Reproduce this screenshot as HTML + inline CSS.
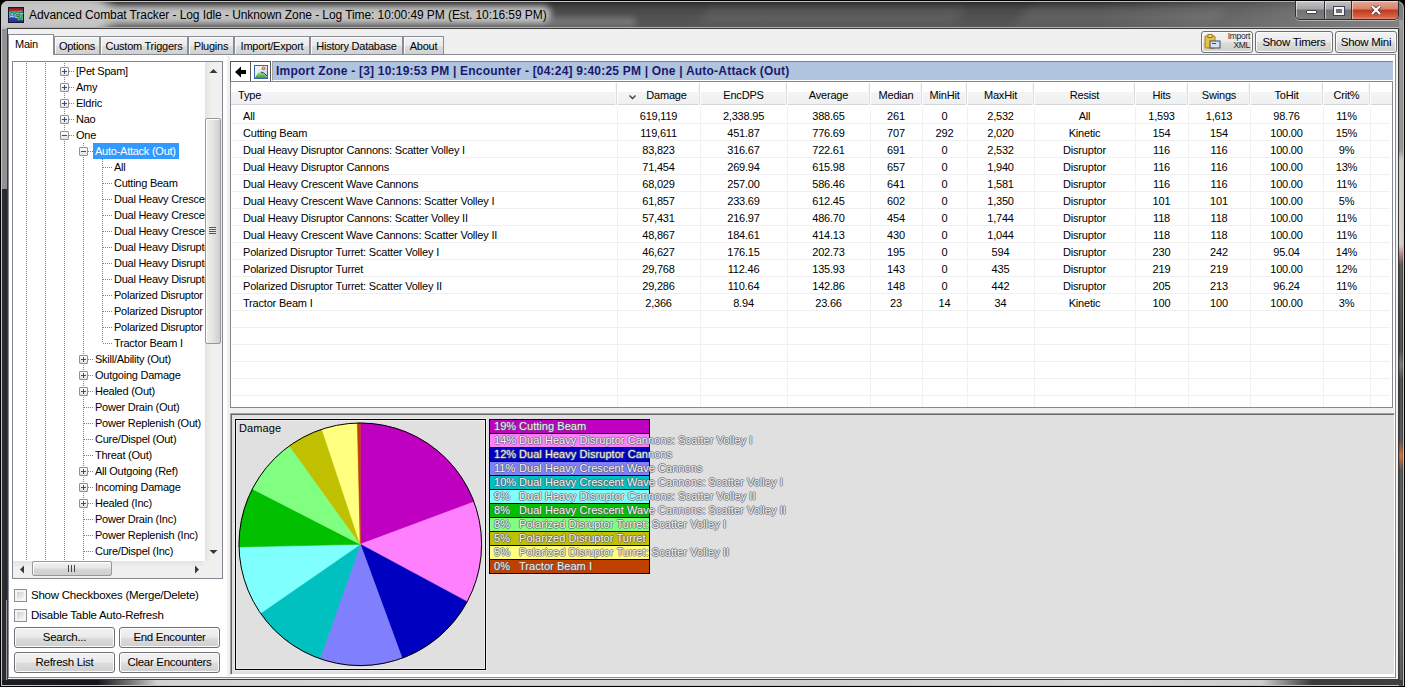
<!DOCTYPE html><html><head><meta charset="utf-8"><style>
*{margin:0;padding:0;box-sizing:border-box}
html,body{width:1405px;height:687px;overflow:hidden;background:#000}
body{position:relative;font-family:"Liberation Sans",sans-serif;font-size:11px;color:#000}
.ab{position:absolute}
.t{position:absolute;white-space:nowrap;letter-spacing:-0.25px;line-height:13px}
.btn{position:absolute;border:1px solid #707070;border-radius:3px;background:linear-gradient(#f2f2f2 0%,#ebebeb 48%,#dddddd 52%,#cfcfcf 100%);box-shadow:inset 0 0 0 1px #fcfcfc;text-align:center;white-space:nowrap;letter-spacing:-0.25px}
.tab{position:absolute;top:36px;height:19px;border:1px solid #898c95;border-bottom:none;background:linear-gradient(#f2f2f2 0%,#ebebeb 50%,#dddddd 50%,#cfcfcf 100%);box-shadow:inset 1px 1px 0 #fcfcfc;white-space:nowrap;letter-spacing:-0.25px;text-align:center;line-height:19px;font-size:11px}
.dotv{position:absolute;width:1px;background-image:linear-gradient(#808080 50%,transparent 50%);background-size:1px 2px}
.doth{position:absolute;height:1px;background-image:linear-gradient(90deg,#808080 50%,transparent 50%);background-size:2px 1px}
.pm{position:absolute;width:9px;height:9px;border:1px solid #919191;border-radius:1px;background:linear-gradient(#fdfdfd,#e2e2e2);}
.pm:before{content:"";position:absolute;left:1px;top:3px;width:5px;height:1px;background:#3f4b7a}
.pm.plus:after{content:"";position:absolute;left:3px;top:1px;width:1px;height:5px;background:#3f4b7a}
.row{position:absolute;left:0;height:17px;line-height:17px;white-space:nowrap;letter-spacing:-0.2px}
</style></head><body>
<div class="ab" style="left:0;top:0;width:1405px;height:687px;background:#000"></div><div class="ab" style="left:1px;top:1px;width:1403px;height:685px;border-radius:7px 7px 0 0;background:#c4c4c4"></div><div class="ab" style="left:2px;top:2px;width:1401px;height:27px;border-radius:6px 6px 0 0;background:linear-gradient(#2a2a2a 0,#3a3a3a 3px,#4a4a4a 8px,#525252 16px,#565656 25px)"></div><div class="ab" style="left:2px;top:29px;width:5px;height:160px;background:#929292"></div><div class="ab" style="left:2px;top:189px;width:5px;height:491px;background:linear-gradient(90deg,#2c2e33,#25272c)"></div><div class="ab" style="left:6px;top:600px;width:1px;height:80px;background:#9a9a9a"></div><div class="ab" style="left:1399px;top:20px;width:4px;height:666px;background:linear-gradient(#8a8a8a 0,#8a8a8a 130px,#c8c2c2 140px,#d0caca 225px,#b07070 235px,#484848 245px,#3c3c3c 330px,#6a6a6a 345px,#3a3a3a 360px,#454545 420px,#c06030 436px,#454545 450px,#505050 550px,#5a5a5a 600px,#444 666px)"></div><div class="ab" style="left:1400px;top:20px;width:2px;height:666px;background:rgba(255,255,255,0.12)"></div><div class="ab" style="left:2px;top:680px;width:1401px;height:5px;background:linear-gradient(90deg,#1c1e26 0,#15161c 95px,#7a7a7a 130px,#d2d2d2 155px,#dadada 400px,#cfcfcf 800px,#d8d8d8 1100px,#cdcdcd 1260px,#3a3a3a 1310px,#404040 1401px)"></div><div class="ab" style="left:1px;top:686px;width:1403px;height:1px;background:#000"></div><div class="ab" style="left:1px;top:1px;width:1403px;height:28px;overflow:hidden;border-radius:7px 7px 0 0"><div class="ab" style="left:-20px;top:5px;width:570px;height:18px;border-radius:0 8px 8px 0;background:#c2c2c2;filter:blur(3px)"></div><div class="ab" style="left:-20px;top:-6px;width:130px;height:40px;border-radius:0 20px 20px 0;background:#c6c6c6;filter:blur(6px)"></div><div class="ab" style="left:545px;top:17px;width:90px;height:8px;border-radius:4px;background:rgba(150,150,150,0.6);filter:blur(3px)"></div><div class="ab" style="left:700px;top:8px;width:260px;height:14px;border-radius:7px;background:rgba(120,120,120,0.35);filter:blur(5px);transform:skewX(-30deg)"></div><div class="ab" style="left:1020px;top:6px;width:200px;height:18px;border-radius:7px;background:rgba(130,130,130,0.35);filter:blur(6px);transform:skewX(-35deg)"></div><div class="ab" style="left:1100px;top:0px;width:303px;height:28px;background:linear-gradient(90deg,rgba(150,150,150,0) 0,rgba(150,150,150,0.45) 180px,rgba(160,160,160,0.6) 303px)"></div></div><div class="ab" style="left:7px;top:28px;width:1392px;height:652px;border:1px solid #3c3c3c;background:#f0f0f0;box-shadow:0 -1px 0 #b4b4b4"></div><svg class="ab" style="left:8px;top:7px" width="16" height="16" viewBox="0 0 16 16">
<defs><linearGradient id="bl" x1="0" y1="0" x2="0" y2="1"><stop offset="0" stop-color="#6a6ae8"/><stop offset="1" stop-color="#2a2a90"/></linearGradient>
<linearGradient id="rd" x1="0" y1="0" x2="0" y2="1"><stop offset="0" stop-color="#701828"/><stop offset="1" stop-color="#c84050"/></linearGradient></defs>
<rect x="0" y="0" width="16" height="16" fill="#15153a"/>
<rect x="1" y="1" width="14" height="14" fill="url(#bl)"/>
<path d="M1 1 H15 V4.5 Q13 3.3 11 4 Q9 5 7 4.3 Q4 3.8 1 5 Z" fill="url(#rd)"/>
<path d="M1 5 Q4 3.8 7 4.3 Q9 5 11 4 Q13 3.3 15 4.5 V13.5 Q12.5 12 10.5 13.5 Q8.5 10.5 5.5 9.8 Q3 9.2 1 10 Z" fill="#36c83a"/>
<text x="8" y="10.6" font-size="6.8" font-family="Liberation Sans" font-weight="bold" font-style="italic" fill="#b8d0ff" stroke="#1a2a60" stroke-width="0.8" paint-order="stroke" text-anchor="middle" letter-spacing="-0.2">ACT</text>
</svg><div class="t" style="left:29px;top:8px;font-size:12px;letter-spacing:-0.08px;line-height:14px;color:#000">Advanced Combat Tracker - Log Idle - Unknown Zone - Log Time: 10:00:49 PM (Est. 10:16:59 PM)</div><div class="ab" style="left:1295px;top:1px;width:104px;height:19px;border:1px solid #2e3038;border-top:none;border-radius:0 0 5px 5px;overflow:hidden;box-shadow:0 1px 0 rgba(255,255,255,0.45)">
<div class="ab" style="left:0;top:0;width:29px;height:18px;background:linear-gradient(#c4c4c4 0,#a4a4a4 45%,#747474 50%,#7e7e7e 100%);border-right:1px solid #2e3038;box-shadow:inset 1px 1px 0 rgba(255,255,255,0.55)"></div>
<div class="ab" style="left:29px;top:0;width:27px;height:18px;background:linear-gradient(#c4c4c4 0,#a4a4a4 45%,#747474 50%,#7e7e7e 100%);border-right:1px solid #2e3038;box-shadow:inset 1px 1px 0 rgba(255,255,255,0.55)"></div>
<div class="ab" style="left:56px;top:0;width:47px;height:18px;background:linear-gradient(#e4a898 0,#d8826a 45%,#c0391a 50%,#d06040 85%,#e08a70 100%);box-shadow:inset 1px 1px 0 rgba(255,255,255,0.5)"></div>
<div class="ab" style="left:10px;top:9px;width:11px;height:4px;background:#fff;border:1px solid #3c4258;border-radius:1px"></div>
<div class="ab" style="left:38px;top:6px;width:10px;height:8px;border:2px solid #f4f4f4;outline:1px solid #3c4258;background:#707070"></div>
<svg class="ab" style="left:74px;top:4px" width="12" height="10" viewBox="0 0 12 10"><path d="M2 1 L10 9 M10 1 L2 9" stroke="#3c3a48" stroke-width="3.6"/><path d="M2 1 L10 9 M10 1 L2 9" stroke="#fff" stroke-width="2.2"/></svg>
</div><div class="tab" style="left:54px;width:46px">Options</div><div class="tab" style="left:100px;width:88px">Custom Triggers</div><div class="tab" style="left:188px;width:46px">Plugins</div><div class="tab" style="left:234px;width:76px">Import/Export</div><div class="tab" style="left:310px;width:93px">History Database</div><div class="tab" style="left:403px;width:41px">About</div><div class="ab" style="left:8px;top:54px;width:1388px;height:624px;border:1px solid #898c95;background:#fff"></div><div class="ab" style="left:8px;top:34px;width:46px;height:21px;border:1px solid #898c95;border-bottom:none;background:#fff;line-height:19px;padding-left:6px;letter-spacing:-0.25px">Main</div><div class="btn" style="left:1201px;top:31px;width:52px;height:22px"></div><svg class="ab" style="left:1204px;top:34px" width="18" height="16" viewBox="0 0 18 16">
<rect x="1" y="2" width="10" height="12" rx="1" fill="#e8c040" stroke="#a08020"/>
<rect x="4" y="0.5" width="4" height="3" fill="#f0e0a0" stroke="#806020" stroke-width="0.8"/>
<rect x="6" y="7" width="10" height="7" fill="#d8e0f0" stroke="#404a60"/>
<rect x="8" y="9" width="4" height="1" fill="#404a60"/>
</svg><div class="t" style="left:1226px;top:31px;font-size:8.5px;line-height:8.5px;padding-top:1px;text-align:right;width:24px;letter-spacing:-0.3px;color:#222">Import<br>XML</div><div class="btn" style="left:1255px;top:31px;width:78px;height:22px;line-height:20px;font-size:11.5px;letter-spacing:-0.3px">Show Timers</div><div class="btn" style="left:1335px;top:31px;width:62px;height:22px;line-height:20px;font-size:11.5px;letter-spacing:-0.3px">Show Mini</div><div class="ab" style="left:12px;top:61px;width:211px;height:518px;border:1px solid #828790;background:#fff;overflow:hidden"><div class="dotv" style="left:13px;top:1px;height:498px"></div><div class="dotv" style="left:32px;top:1px;height:498px"></div><div class="dotv" style="left:51px;top:1px;height:498px"></div><div class="dotv" style="left:70px;top:81px;height:418px"></div><div class="dotv" style="left:89px;top:97px;height:184px"></div><div class="doth" style="left:52px;top:9px;width:10px"></div><div class="pm plus" style="left:47px;top:5px"></div><div class="t" style="left:63px;top:2px;line-height:14px">[Pet Spam]</div><div class="doth" style="left:52px;top:25px;width:10px"></div><div class="pm plus" style="left:47px;top:21px"></div><div class="t" style="left:63px;top:18px;line-height:14px">Amy</div><div class="doth" style="left:52px;top:41px;width:10px"></div><div class="pm plus" style="left:47px;top:37px"></div><div class="t" style="left:63px;top:34px;line-height:14px">Eldric</div><div class="doth" style="left:52px;top:57px;width:10px"></div><div class="pm plus" style="left:47px;top:53px"></div><div class="t" style="left:63px;top:50px;line-height:14px">Nao</div><div class="doth" style="left:52px;top:73px;width:10px"></div><div class="pm minus" style="left:47px;top:69px"></div><div class="t" style="left:63px;top:66px;line-height:14px">One</div><div class="doth" style="left:71px;top:89px;width:10px"></div><div class="pm minus" style="left:66px;top:85px"></div><div class="ab" style="left:80px;top:81px;width:86px;height:16px;background:#3399ff"></div><div class="t" style="left:82px;top:82px;color:#fff;line-height:14px">Auto-Attack (Out)</div><div class="doth" style="left:90px;top:105px;width:9px"></div><div class="t" style="left:101px;top:98px;line-height:14px">All</div><div class="doth" style="left:90px;top:121px;width:9px"></div><div class="t" style="left:101px;top:114px;line-height:14px">Cutting Beam</div><div class="doth" style="left:90px;top:137px;width:9px"></div><div class="t" style="left:101px;top:130px;line-height:14px">Dual Heavy Crescent Wave</div><div class="doth" style="left:90px;top:153px;width:9px"></div><div class="t" style="left:101px;top:146px;line-height:14px">Dual Heavy Crescent Wave</div><div class="doth" style="left:90px;top:169px;width:9px"></div><div class="t" style="left:101px;top:162px;line-height:14px">Dual Heavy Crescent Wave</div><div class="doth" style="left:90px;top:185px;width:9px"></div><div class="t" style="left:101px;top:178px;line-height:14px">Dual Heavy Disruptor Cannons</div><div class="doth" style="left:90px;top:201px;width:9px"></div><div class="t" style="left:101px;top:194px;line-height:14px">Dual Heavy Disruptor Cannons</div><div class="doth" style="left:90px;top:217px;width:9px"></div><div class="t" style="left:101px;top:210px;line-height:14px">Dual Heavy Disruptor Cannons</div><div class="doth" style="left:90px;top:233px;width:9px"></div><div class="t" style="left:101px;top:226px;line-height:14px">Polarized Disruptor Turret</div><div class="doth" style="left:90px;top:249px;width:9px"></div><div class="t" style="left:101px;top:242px;line-height:14px">Polarized Disruptor Turret</div><div class="doth" style="left:90px;top:265px;width:9px"></div><div class="t" style="left:101px;top:258px;line-height:14px">Polarized Disruptor Turret</div><div class="doth" style="left:90px;top:281px;width:9px"></div><div class="t" style="left:101px;top:274px;line-height:14px">Tractor Beam I</div><div class="doth" style="left:71px;top:297px;width:10px"></div><div class="pm plus" style="left:66px;top:293px"></div><div class="t" style="left:82px;top:290px;line-height:14px">Skill/Ability (Out)</div><div class="doth" style="left:71px;top:313px;width:10px"></div><div class="pm plus" style="left:66px;top:309px"></div><div class="t" style="left:82px;top:306px;line-height:14px">Outgoing Damage</div><div class="doth" style="left:71px;top:329px;width:10px"></div><div class="pm plus" style="left:66px;top:325px"></div><div class="t" style="left:82px;top:322px;line-height:14px">Healed (Out)</div><div class="doth" style="left:71px;top:345px;width:9px"></div><div class="t" style="left:82px;top:338px;line-height:14px">Power Drain (Out)</div><div class="doth" style="left:71px;top:361px;width:9px"></div><div class="t" style="left:82px;top:354px;line-height:14px">Power Replenish (Out)</div><div class="doth" style="left:71px;top:377px;width:9px"></div><div class="t" style="left:82px;top:370px;line-height:14px">Cure/Dispel (Out)</div><div class="doth" style="left:71px;top:393px;width:9px"></div><div class="t" style="left:82px;top:386px;line-height:14px">Threat (Out)</div><div class="doth" style="left:71px;top:409px;width:10px"></div><div class="pm plus" style="left:66px;top:405px"></div><div class="t" style="left:82px;top:402px;line-height:14px">All Outgoing (Ref)</div><div class="doth" style="left:71px;top:425px;width:10px"></div><div class="pm plus" style="left:66px;top:421px"></div><div class="t" style="left:82px;top:418px;line-height:14px">Incoming Damage</div><div class="doth" style="left:71px;top:441px;width:10px"></div><div class="pm plus" style="left:66px;top:437px"></div><div class="t" style="left:82px;top:434px;line-height:14px">Healed (Inc)</div><div class="doth" style="left:71px;top:457px;width:9px"></div><div class="t" style="left:82px;top:450px;line-height:14px">Power Drain (Inc)</div><div class="doth" style="left:71px;top:473px;width:9px"></div><div class="t" style="left:82px;top:466px;line-height:14px">Power Replenish (Inc)</div><div class="doth" style="left:71px;top:489px;width:9px"></div><div class="t" style="left:82px;top:482px;line-height:14px">Cure/Dispel (Inc)</div><div class="ab" style="left:192px;top:0;width:17px;height:499px;background:linear-gradient(90deg,#e3e3e3,#f0f0f0 40%,#f0f0f0)"></div><svg class="ab" style="left:196px;top:6px" width="9" height="6" viewBox="0 0 9 6"><path d="M0.5 5 L4.5 1 L8.5 5 Z" fill="#383838"/></svg><svg class="ab" style="left:196px;top:487px" width="9" height="6" viewBox="0 0 9 6"><path d="M0.5 1 L4.5 5 L8.5 1 Z" fill="#383838"/></svg><div class="ab" style="left:192px;top:56px;width:16px;height:226px;border:1px solid #979797;border-radius:2px;background:linear-gradient(90deg,#f0f0f0 0,#e4e4e4 50%,#cdcdcd 100%);box-shadow:inset 1px 1px 0 #fff"></div><div class="ab" style="left:196px;top:165px;width:7px;height:7px;background:repeating-linear-gradient(#555 0,#555 1px,#e8e8e8 1px,#e8e8e8 2px)"></div><div class="ab" style="left:0;top:499px;width:192px;height:17px;background:linear-gradient(#e3e3e3,#f0f0f0 40%,#f0f0f0)"></div><div class="ab" style="left:191px;top:499px;width:18px;height:17px;background:#f0f0f0"></div><svg class="ab" style="left:6px;top:503px" width="6" height="9" viewBox="0 0 6 9"><path d="M5 0.5 L1 4.5 L5 8.5 Z" fill="#383838"/></svg><svg class="ab" style="left:181px;top:503px" width="6" height="9" viewBox="0 0 6 9"><path d="M1 0.5 L5 4.5 L1 8.5 Z" fill="#383838"/></svg><div class="ab" style="left:19px;top:499px;width:80px;height:15px;border:1px solid #979797;border-radius:2px;background:linear-gradient(#f2f2f2 0,#e6e6e6 45%,#d6d6d6 55%,#cfcfcf 100%);box-shadow:inset 1px 1px 0 #fff"></div><div class="ab" style="left:55px;top:503px;width:7px;height:7px;background:repeating-linear-gradient(90deg,#444 0,#444 1px,transparent 1px,transparent 3px)"></div></div><div class="ab" style="left:14px;top:589px;width:13px;height:13px;border:1px solid #8e8f8f;background:#f4f4f4"><div class="ab" style="left:2px;top:2px;width:7px;height:7px;background:linear-gradient(135deg,#cbcfd5,#f6f6f6)"></div></div><div class="t" style="left:31px;top:589px;font-size:11.5px;letter-spacing:-0.25px">Show Checkboxes (Merge/Delete)</div><div class="ab" style="left:14px;top:609px;width:13px;height:13px;border:1px solid #8e8f8f;background:#f4f4f4"><div class="ab" style="left:2px;top:2px;width:7px;height:7px;background:linear-gradient(135deg,#cbcfd5,#f6f6f6)"></div></div><div class="t" style="left:31px;top:609px;font-size:11.5px;letter-spacing:-0.25px">Disable Table Auto-Refresh</div><div class="btn" style="left:14px;top:627px;width:101px;height:21px;line-height:19px;font-size:11.5px;letter-spacing:-0.3px">Search...</div><div class="btn" style="left:119px;top:627px;width:101px;height:21px;line-height:19px;font-size:11.5px;letter-spacing:-0.3px">End Encounter</div><div class="btn" style="left:14px;top:652px;width:101px;height:21px;line-height:19px;font-size:11.5px;letter-spacing:-0.3px">Refresh List</div><div class="btn" style="left:119px;top:652px;width:101px;height:21px;line-height:19px;font-size:11.5px;letter-spacing:-0.3px">Clear Encounters</div><div class="ab" style="left:227px;top:56px;width:3px;height:620px;background:#f0f0f0"></div><div class="ab" style="left:230px;top:61px;width:21px;height:21px;border:1px solid #555;background:#fff"></div><div class="ab" style="left:250px;top:61px;width:21px;height:21px;border:1px solid #555;background:#fff"></div><svg class="ab" style="left:234px;top:66px" width="13" height="12" viewBox="0 0 13 12"><path d="M1 6 L7 0.5 L7 4 L12 4 L12 8 L7 8 L7 11.5 Z" fill="#000"/></svg><svg class="ab" style="left:254px;top:65px" width="14" height="14" viewBox="0 0 14 14">
<defs><linearGradient id="sky" x1="0" y1="0" x2="1" y2="1"><stop offset="0" stop-color="#ffffff"/><stop offset="1" stop-color="#b8cef0"/></linearGradient>
<linearGradient id="hill" x1="0" y1="0" x2="0" y2="1"><stop offset="0" stop-color="#b8e8a0"/><stop offset="1" stop-color="#3a9a2a"/></linearGradient></defs>
<rect x="0.5" y="0.5" width="13" height="13" fill="url(#sky)" stroke="#3a62b0"/>
<path d="M1 13 Q4 7 6.5 6.5 Q8 6.5 13 12.5 L13 13 Z" fill="url(#hill)"/>
<path d="M7 7 Q9 6.8 13 11" stroke="#202020" fill="none" stroke-width="0.9"/>
<circle cx="9.5" cy="3.3" r="1.9" fill="#f06a20"/><circle cx="9.5" cy="3.3" r="0.8" fill="#ffd060"/>
</svg><div class="ab" style="left:272px;top:61px;width:1121px;height:20px;background:#b0c4de;border-top:1px solid #808080;border-left:1px solid #a0a0a0;border-bottom:1px solid #fff"></div><div class="t" style="left:276px;top:64px;font-size:12px;font-weight:bold;color:#191970;letter-spacing:0.21px;line-height:14px">Import Zone - [3] 10:19:53 PM | Encounter - [04:24] 9:40:25 PM | One | Auto-Attack (Out)</div><div class="ab" style="left:230px;top:81px;width:1163px;height:327px;border:1px solid #828790;background:#fff;overflow:hidden"><div class="ab" style="left:0;top:0;width:1161px;height:23px;background:linear-gradient(#ffffff 0,#ffffff 45%,#f3f4f6 45%,#eef0f2 100%);border-bottom:1px solid #d5d5d5"></div><div class="ab" style="left:385px;top:1px;width:1px;height:22px;background:#dcdcdc;box-shadow:1px 0 0 #fff, -1px 0 0 #f7f7f7"></div><div class="t" style="left:7px;top:7px;line-height:12px;letter-spacing:-0.2px">Type</div><div class="ab" style="left:468px;top:1px;width:1px;height:22px;background:#dcdcdc;box-shadow:1px 0 0 #fff, -1px 0 0 #f7f7f7"></div><div class="t" style="left:394px;top:7px;width:83px;text-align:center;line-height:12px;letter-spacing:-0.2px">Damage</div><div class="ab" style="left:555px;top:1px;width:1px;height:22px;background:#dcdcdc;box-shadow:1px 0 0 #fff, -1px 0 0 #f7f7f7"></div><div class="t" style="left:469px;top:7px;width:87px;text-align:center;line-height:12px;letter-spacing:-0.2px">EncDPS</div><div class="ab" style="left:638px;top:1px;width:1px;height:22px;background:#dcdcdc;box-shadow:1px 0 0 #fff, -1px 0 0 #f7f7f7"></div><div class="t" style="left:556px;top:7px;width:83px;text-align:center;line-height:12px;letter-spacing:-0.2px">Average</div><div class="ab" style="left:690px;top:1px;width:1px;height:22px;background:#dcdcdc;box-shadow:1px 0 0 #fff, -1px 0 0 #f7f7f7"></div><div class="t" style="left:639px;top:7px;width:52px;text-align:center;line-height:12px;letter-spacing:-0.2px">Median</div><div class="ab" style="left:735px;top:1px;width:1px;height:22px;background:#dcdcdc;box-shadow:1px 0 0 #fff, -1px 0 0 #f7f7f7"></div><div class="t" style="left:691px;top:7px;width:45px;text-align:center;line-height:12px;letter-spacing:-0.2px">MinHit</div><div class="ab" style="left:802px;top:1px;width:1px;height:22px;background:#dcdcdc;box-shadow:1px 0 0 #fff, -1px 0 0 #f7f7f7"></div><div class="t" style="left:736px;top:7px;width:67px;text-align:center;line-height:12px;letter-spacing:-0.2px">MaxHit</div><div class="ab" style="left:903px;top:1px;width:1px;height:22px;background:#dcdcdc;box-shadow:1px 0 0 #fff, -1px 0 0 #f7f7f7"></div><div class="t" style="left:803px;top:7px;width:101px;text-align:center;line-height:12px;letter-spacing:-0.2px">Resist</div><div class="ab" style="left:956px;top:1px;width:1px;height:22px;background:#dcdcdc;box-shadow:1px 0 0 #fff, -1px 0 0 #f7f7f7"></div><div class="t" style="left:904px;top:7px;width:53px;text-align:center;line-height:12px;letter-spacing:-0.2px">Hits</div><div class="ab" style="left:1018px;top:1px;width:1px;height:22px;background:#dcdcdc;box-shadow:1px 0 0 #fff, -1px 0 0 #f7f7f7"></div><div class="t" style="left:957px;top:7px;width:62px;text-align:center;line-height:12px;letter-spacing:-0.2px">Swings</div><div class="ab" style="left:1091px;top:1px;width:1px;height:22px;background:#dcdcdc;box-shadow:1px 0 0 #fff, -1px 0 0 #f7f7f7"></div><div class="t" style="left:1019px;top:7px;width:73px;text-align:center;line-height:12px;letter-spacing:-0.2px">ToHit</div><div class="ab" style="left:1138px;top:1px;width:1px;height:22px;background:#dcdcdc;box-shadow:1px 0 0 #fff, -1px 0 0 #f7f7f7"></div><div class="t" style="left:1092px;top:7px;width:47px;text-align:center;line-height:12px;letter-spacing:-0.2px">Crit%</div><svg class="ab" style="left:398px;top:13px" width="7" height="5" viewBox="0 0 7 5"><path d="M0.5 0.5 L3.5 3.5 L6.5 0.5" stroke="#3c3c3c" fill="none" stroke-width="1.3"/></svg><div class="ab" style="left:1px;top:41px;width:1158px;height:1px;background:#f0f0f0"></div><div class="ab" style="left:1px;top:58px;width:1158px;height:1px;background:#f0f0f0"></div><div class="ab" style="left:1px;top:75px;width:1158px;height:1px;background:#f0f0f0"></div><div class="ab" style="left:1px;top:92px;width:1158px;height:1px;background:#f0f0f0"></div><div class="ab" style="left:1px;top:109px;width:1158px;height:1px;background:#f0f0f0"></div><div class="ab" style="left:1px;top:126px;width:1158px;height:1px;background:#f0f0f0"></div><div class="ab" style="left:1px;top:143px;width:1158px;height:1px;background:#f0f0f0"></div><div class="ab" style="left:1px;top:160px;width:1158px;height:1px;background:#f0f0f0"></div><div class="ab" style="left:1px;top:177px;width:1158px;height:1px;background:#f0f0f0"></div><div class="ab" style="left:1px;top:194px;width:1158px;height:1px;background:#f0f0f0"></div><div class="ab" style="left:1px;top:211px;width:1158px;height:1px;background:#f0f0f0"></div><div class="ab" style="left:1px;top:228px;width:1158px;height:1px;background:#f0f0f0"></div><div class="ab" style="left:1px;top:245px;width:1158px;height:1px;background:#f0f0f0"></div><div class="ab" style="left:1px;top:262px;width:1158px;height:1px;background:#f0f0f0"></div><div class="ab" style="left:1px;top:279px;width:1158px;height:1px;background:#f0f0f0"></div><div class="ab" style="left:1px;top:296px;width:1158px;height:1px;background:#f0f0f0"></div><div class="ab" style="left:1px;top:313px;width:1158px;height:1px;background:#f0f0f0"></div><div class="ab" style="left:386px;top:25px;width:1px;height:300px;background:#f0f0f0"></div><div class="ab" style="left:469px;top:25px;width:1px;height:300px;background:#f0f0f0"></div><div class="ab" style="left:556px;top:25px;width:1px;height:300px;background:#f0f0f0"></div><div class="ab" style="left:639px;top:25px;width:1px;height:300px;background:#f0f0f0"></div><div class="ab" style="left:691px;top:25px;width:1px;height:300px;background:#f0f0f0"></div><div class="ab" style="left:736px;top:25px;width:1px;height:300px;background:#f0f0f0"></div><div class="ab" style="left:803px;top:25px;width:1px;height:300px;background:#f0f0f0"></div><div class="ab" style="left:904px;top:25px;width:1px;height:300px;background:#f0f0f0"></div><div class="ab" style="left:957px;top:25px;width:1px;height:300px;background:#f0f0f0"></div><div class="ab" style="left:1019px;top:25px;width:1px;height:300px;background:#f0f0f0"></div><div class="ab" style="left:1092px;top:25px;width:1px;height:300px;background:#f0f0f0"></div><div class="ab" style="left:1139px;top:25px;width:1px;height:300px;background:#f0f0f0"></div><div class="t" style="left:12px;top:28px;line-height:12px;letter-spacing:-0.2px">All</div><div class="t" style="left:386px;top:28px;width:83px;text-align:center;line-height:12px;letter-spacing:-0.2px">619,119</div><div class="t" style="left:469px;top:28px;width:87px;text-align:center;line-height:12px;letter-spacing:-0.2px">2,338.95</div><div class="t" style="left:556px;top:28px;width:83px;text-align:center;line-height:12px;letter-spacing:-0.2px">388.65</div><div class="t" style="left:639px;top:28px;width:52px;text-align:center;line-height:12px;letter-spacing:-0.2px">261</div><div class="t" style="left:691px;top:28px;width:45px;text-align:center;line-height:12px;letter-spacing:-0.2px">0</div><div class="t" style="left:736px;top:28px;width:67px;text-align:center;line-height:12px;letter-spacing:-0.2px">2,532</div><div class="t" style="left:803px;top:28px;width:101px;text-align:center;line-height:12px;letter-spacing:-0.2px">All</div><div class="t" style="left:904px;top:28px;width:53px;text-align:center;line-height:12px;letter-spacing:-0.2px">1,593</div><div class="t" style="left:957px;top:28px;width:62px;text-align:center;line-height:12px;letter-spacing:-0.2px">1,613</div><div class="t" style="left:1019px;top:28px;width:73px;text-align:center;line-height:12px;letter-spacing:-0.2px">98.76</div><div class="t" style="left:1092px;top:28px;width:47px;text-align:center;line-height:12px;letter-spacing:-0.2px">11%</div><div class="t" style="left:12px;top:45px;line-height:12px;letter-spacing:-0.2px">Cutting Beam</div><div class="t" style="left:386px;top:45px;width:83px;text-align:center;line-height:12px;letter-spacing:-0.2px">119,611</div><div class="t" style="left:469px;top:45px;width:87px;text-align:center;line-height:12px;letter-spacing:-0.2px">451.87</div><div class="t" style="left:556px;top:45px;width:83px;text-align:center;line-height:12px;letter-spacing:-0.2px">776.69</div><div class="t" style="left:639px;top:45px;width:52px;text-align:center;line-height:12px;letter-spacing:-0.2px">707</div><div class="t" style="left:691px;top:45px;width:45px;text-align:center;line-height:12px;letter-spacing:-0.2px">292</div><div class="t" style="left:736px;top:45px;width:67px;text-align:center;line-height:12px;letter-spacing:-0.2px">2,020</div><div class="t" style="left:803px;top:45px;width:101px;text-align:center;line-height:12px;letter-spacing:-0.2px">Kinetic</div><div class="t" style="left:904px;top:45px;width:53px;text-align:center;line-height:12px;letter-spacing:-0.2px">154</div><div class="t" style="left:957px;top:45px;width:62px;text-align:center;line-height:12px;letter-spacing:-0.2px">154</div><div class="t" style="left:1019px;top:45px;width:73px;text-align:center;line-height:12px;letter-spacing:-0.2px">100.00</div><div class="t" style="left:1092px;top:45px;width:47px;text-align:center;line-height:12px;letter-spacing:-0.2px">15%</div><div class="t" style="left:12px;top:62px;line-height:12px;letter-spacing:-0.2px">Dual Heavy Disruptor Cannons: Scatter Volley I</div><div class="t" style="left:386px;top:62px;width:83px;text-align:center;line-height:12px;letter-spacing:-0.2px">83,823</div><div class="t" style="left:469px;top:62px;width:87px;text-align:center;line-height:12px;letter-spacing:-0.2px">316.67</div><div class="t" style="left:556px;top:62px;width:83px;text-align:center;line-height:12px;letter-spacing:-0.2px">722.61</div><div class="t" style="left:639px;top:62px;width:52px;text-align:center;line-height:12px;letter-spacing:-0.2px">691</div><div class="t" style="left:691px;top:62px;width:45px;text-align:center;line-height:12px;letter-spacing:-0.2px">0</div><div class="t" style="left:736px;top:62px;width:67px;text-align:center;line-height:12px;letter-spacing:-0.2px">2,532</div><div class="t" style="left:803px;top:62px;width:101px;text-align:center;line-height:12px;letter-spacing:-0.2px">Disruptor</div><div class="t" style="left:904px;top:62px;width:53px;text-align:center;line-height:12px;letter-spacing:-0.2px">116</div><div class="t" style="left:957px;top:62px;width:62px;text-align:center;line-height:12px;letter-spacing:-0.2px">116</div><div class="t" style="left:1019px;top:62px;width:73px;text-align:center;line-height:12px;letter-spacing:-0.2px">100.00</div><div class="t" style="left:1092px;top:62px;width:47px;text-align:center;line-height:12px;letter-spacing:-0.2px">9%</div><div class="t" style="left:12px;top:79px;line-height:12px;letter-spacing:-0.2px">Dual Heavy Disruptor Cannons</div><div class="t" style="left:386px;top:79px;width:83px;text-align:center;line-height:12px;letter-spacing:-0.2px">71,454</div><div class="t" style="left:469px;top:79px;width:87px;text-align:center;line-height:12px;letter-spacing:-0.2px">269.94</div><div class="t" style="left:556px;top:79px;width:83px;text-align:center;line-height:12px;letter-spacing:-0.2px">615.98</div><div class="t" style="left:639px;top:79px;width:52px;text-align:center;line-height:12px;letter-spacing:-0.2px">657</div><div class="t" style="left:691px;top:79px;width:45px;text-align:center;line-height:12px;letter-spacing:-0.2px">0</div><div class="t" style="left:736px;top:79px;width:67px;text-align:center;line-height:12px;letter-spacing:-0.2px">1,940</div><div class="t" style="left:803px;top:79px;width:101px;text-align:center;line-height:12px;letter-spacing:-0.2px">Disruptor</div><div class="t" style="left:904px;top:79px;width:53px;text-align:center;line-height:12px;letter-spacing:-0.2px">116</div><div class="t" style="left:957px;top:79px;width:62px;text-align:center;line-height:12px;letter-spacing:-0.2px">116</div><div class="t" style="left:1019px;top:79px;width:73px;text-align:center;line-height:12px;letter-spacing:-0.2px">100.00</div><div class="t" style="left:1092px;top:79px;width:47px;text-align:center;line-height:12px;letter-spacing:-0.2px">13%</div><div class="t" style="left:12px;top:96px;line-height:12px;letter-spacing:-0.2px">Dual Heavy Crescent Wave Cannons</div><div class="t" style="left:386px;top:96px;width:83px;text-align:center;line-height:12px;letter-spacing:-0.2px">68,029</div><div class="t" style="left:469px;top:96px;width:87px;text-align:center;line-height:12px;letter-spacing:-0.2px">257.00</div><div class="t" style="left:556px;top:96px;width:83px;text-align:center;line-height:12px;letter-spacing:-0.2px">586.46</div><div class="t" style="left:639px;top:96px;width:52px;text-align:center;line-height:12px;letter-spacing:-0.2px">641</div><div class="t" style="left:691px;top:96px;width:45px;text-align:center;line-height:12px;letter-spacing:-0.2px">0</div><div class="t" style="left:736px;top:96px;width:67px;text-align:center;line-height:12px;letter-spacing:-0.2px">1,581</div><div class="t" style="left:803px;top:96px;width:101px;text-align:center;line-height:12px;letter-spacing:-0.2px">Disruptor</div><div class="t" style="left:904px;top:96px;width:53px;text-align:center;line-height:12px;letter-spacing:-0.2px">116</div><div class="t" style="left:957px;top:96px;width:62px;text-align:center;line-height:12px;letter-spacing:-0.2px">116</div><div class="t" style="left:1019px;top:96px;width:73px;text-align:center;line-height:12px;letter-spacing:-0.2px">100.00</div><div class="t" style="left:1092px;top:96px;width:47px;text-align:center;line-height:12px;letter-spacing:-0.2px">11%</div><div class="t" style="left:12px;top:113px;line-height:12px;letter-spacing:-0.2px">Dual Heavy Crescent Wave Cannons: Scatter Volley I</div><div class="t" style="left:386px;top:113px;width:83px;text-align:center;line-height:12px;letter-spacing:-0.2px">61,857</div><div class="t" style="left:469px;top:113px;width:87px;text-align:center;line-height:12px;letter-spacing:-0.2px">233.69</div><div class="t" style="left:556px;top:113px;width:83px;text-align:center;line-height:12px;letter-spacing:-0.2px">612.45</div><div class="t" style="left:639px;top:113px;width:52px;text-align:center;line-height:12px;letter-spacing:-0.2px">602</div><div class="t" style="left:691px;top:113px;width:45px;text-align:center;line-height:12px;letter-spacing:-0.2px">0</div><div class="t" style="left:736px;top:113px;width:67px;text-align:center;line-height:12px;letter-spacing:-0.2px">1,350</div><div class="t" style="left:803px;top:113px;width:101px;text-align:center;line-height:12px;letter-spacing:-0.2px">Disruptor</div><div class="t" style="left:904px;top:113px;width:53px;text-align:center;line-height:12px;letter-spacing:-0.2px">101</div><div class="t" style="left:957px;top:113px;width:62px;text-align:center;line-height:12px;letter-spacing:-0.2px">101</div><div class="t" style="left:1019px;top:113px;width:73px;text-align:center;line-height:12px;letter-spacing:-0.2px">100.00</div><div class="t" style="left:1092px;top:113px;width:47px;text-align:center;line-height:12px;letter-spacing:-0.2px">5%</div><div class="t" style="left:12px;top:130px;line-height:12px;letter-spacing:-0.2px">Dual Heavy Disruptor Cannons: Scatter Volley II</div><div class="t" style="left:386px;top:130px;width:83px;text-align:center;line-height:12px;letter-spacing:-0.2px">57,431</div><div class="t" style="left:469px;top:130px;width:87px;text-align:center;line-height:12px;letter-spacing:-0.2px">216.97</div><div class="t" style="left:556px;top:130px;width:83px;text-align:center;line-height:12px;letter-spacing:-0.2px">486.70</div><div class="t" style="left:639px;top:130px;width:52px;text-align:center;line-height:12px;letter-spacing:-0.2px">454</div><div class="t" style="left:691px;top:130px;width:45px;text-align:center;line-height:12px;letter-spacing:-0.2px">0</div><div class="t" style="left:736px;top:130px;width:67px;text-align:center;line-height:12px;letter-spacing:-0.2px">1,744</div><div class="t" style="left:803px;top:130px;width:101px;text-align:center;line-height:12px;letter-spacing:-0.2px">Disruptor</div><div class="t" style="left:904px;top:130px;width:53px;text-align:center;line-height:12px;letter-spacing:-0.2px">118</div><div class="t" style="left:957px;top:130px;width:62px;text-align:center;line-height:12px;letter-spacing:-0.2px">118</div><div class="t" style="left:1019px;top:130px;width:73px;text-align:center;line-height:12px;letter-spacing:-0.2px">100.00</div><div class="t" style="left:1092px;top:130px;width:47px;text-align:center;line-height:12px;letter-spacing:-0.2px">11%</div><div class="t" style="left:12px;top:147px;line-height:12px;letter-spacing:-0.2px">Dual Heavy Crescent Wave Cannons: Scatter Volley II</div><div class="t" style="left:386px;top:147px;width:83px;text-align:center;line-height:12px;letter-spacing:-0.2px">48,867</div><div class="t" style="left:469px;top:147px;width:87px;text-align:center;line-height:12px;letter-spacing:-0.2px">184.61</div><div class="t" style="left:556px;top:147px;width:83px;text-align:center;line-height:12px;letter-spacing:-0.2px">414.13</div><div class="t" style="left:639px;top:147px;width:52px;text-align:center;line-height:12px;letter-spacing:-0.2px">430</div><div class="t" style="left:691px;top:147px;width:45px;text-align:center;line-height:12px;letter-spacing:-0.2px">0</div><div class="t" style="left:736px;top:147px;width:67px;text-align:center;line-height:12px;letter-spacing:-0.2px">1,044</div><div class="t" style="left:803px;top:147px;width:101px;text-align:center;line-height:12px;letter-spacing:-0.2px">Disruptor</div><div class="t" style="left:904px;top:147px;width:53px;text-align:center;line-height:12px;letter-spacing:-0.2px">118</div><div class="t" style="left:957px;top:147px;width:62px;text-align:center;line-height:12px;letter-spacing:-0.2px">118</div><div class="t" style="left:1019px;top:147px;width:73px;text-align:center;line-height:12px;letter-spacing:-0.2px">100.00</div><div class="t" style="left:1092px;top:147px;width:47px;text-align:center;line-height:12px;letter-spacing:-0.2px">11%</div><div class="t" style="left:12px;top:164px;line-height:12px;letter-spacing:-0.2px">Polarized Disruptor Turret: Scatter Volley I</div><div class="t" style="left:386px;top:164px;width:83px;text-align:center;line-height:12px;letter-spacing:-0.2px">46,627</div><div class="t" style="left:469px;top:164px;width:87px;text-align:center;line-height:12px;letter-spacing:-0.2px">176.15</div><div class="t" style="left:556px;top:164px;width:83px;text-align:center;line-height:12px;letter-spacing:-0.2px">202.73</div><div class="t" style="left:639px;top:164px;width:52px;text-align:center;line-height:12px;letter-spacing:-0.2px">195</div><div class="t" style="left:691px;top:164px;width:45px;text-align:center;line-height:12px;letter-spacing:-0.2px">0</div><div class="t" style="left:736px;top:164px;width:67px;text-align:center;line-height:12px;letter-spacing:-0.2px">594</div><div class="t" style="left:803px;top:164px;width:101px;text-align:center;line-height:12px;letter-spacing:-0.2px">Disruptor</div><div class="t" style="left:904px;top:164px;width:53px;text-align:center;line-height:12px;letter-spacing:-0.2px">230</div><div class="t" style="left:957px;top:164px;width:62px;text-align:center;line-height:12px;letter-spacing:-0.2px">242</div><div class="t" style="left:1019px;top:164px;width:73px;text-align:center;line-height:12px;letter-spacing:-0.2px">95.04</div><div class="t" style="left:1092px;top:164px;width:47px;text-align:center;line-height:12px;letter-spacing:-0.2px">14%</div><div class="t" style="left:12px;top:181px;line-height:12px;letter-spacing:-0.2px">Polarized Disruptor Turret</div><div class="t" style="left:386px;top:181px;width:83px;text-align:center;line-height:12px;letter-spacing:-0.2px">29,768</div><div class="t" style="left:469px;top:181px;width:87px;text-align:center;line-height:12px;letter-spacing:-0.2px">112.46</div><div class="t" style="left:556px;top:181px;width:83px;text-align:center;line-height:12px;letter-spacing:-0.2px">135.93</div><div class="t" style="left:639px;top:181px;width:52px;text-align:center;line-height:12px;letter-spacing:-0.2px">143</div><div class="t" style="left:691px;top:181px;width:45px;text-align:center;line-height:12px;letter-spacing:-0.2px">0</div><div class="t" style="left:736px;top:181px;width:67px;text-align:center;line-height:12px;letter-spacing:-0.2px">435</div><div class="t" style="left:803px;top:181px;width:101px;text-align:center;line-height:12px;letter-spacing:-0.2px">Disruptor</div><div class="t" style="left:904px;top:181px;width:53px;text-align:center;line-height:12px;letter-spacing:-0.2px">219</div><div class="t" style="left:957px;top:181px;width:62px;text-align:center;line-height:12px;letter-spacing:-0.2px">219</div><div class="t" style="left:1019px;top:181px;width:73px;text-align:center;line-height:12px;letter-spacing:-0.2px">100.00</div><div class="t" style="left:1092px;top:181px;width:47px;text-align:center;line-height:12px;letter-spacing:-0.2px">12%</div><div class="t" style="left:12px;top:198px;line-height:12px;letter-spacing:-0.2px">Polarized Disruptor Turret: Scatter Volley II</div><div class="t" style="left:386px;top:198px;width:83px;text-align:center;line-height:12px;letter-spacing:-0.2px">29,286</div><div class="t" style="left:469px;top:198px;width:87px;text-align:center;line-height:12px;letter-spacing:-0.2px">110.64</div><div class="t" style="left:556px;top:198px;width:83px;text-align:center;line-height:12px;letter-spacing:-0.2px">142.86</div><div class="t" style="left:639px;top:198px;width:52px;text-align:center;line-height:12px;letter-spacing:-0.2px">148</div><div class="t" style="left:691px;top:198px;width:45px;text-align:center;line-height:12px;letter-spacing:-0.2px">0</div><div class="t" style="left:736px;top:198px;width:67px;text-align:center;line-height:12px;letter-spacing:-0.2px">442</div><div class="t" style="left:803px;top:198px;width:101px;text-align:center;line-height:12px;letter-spacing:-0.2px">Disruptor</div><div class="t" style="left:904px;top:198px;width:53px;text-align:center;line-height:12px;letter-spacing:-0.2px">205</div><div class="t" style="left:957px;top:198px;width:62px;text-align:center;line-height:12px;letter-spacing:-0.2px">213</div><div class="t" style="left:1019px;top:198px;width:73px;text-align:center;line-height:12px;letter-spacing:-0.2px">96.24</div><div class="t" style="left:1092px;top:198px;width:47px;text-align:center;line-height:12px;letter-spacing:-0.2px">11%</div><div class="t" style="left:12px;top:215px;line-height:12px;letter-spacing:-0.2px">Tractor Beam I</div><div class="t" style="left:386px;top:215px;width:83px;text-align:center;line-height:12px;letter-spacing:-0.2px">2,366</div><div class="t" style="left:469px;top:215px;width:87px;text-align:center;line-height:12px;letter-spacing:-0.2px">8.94</div><div class="t" style="left:556px;top:215px;width:83px;text-align:center;line-height:12px;letter-spacing:-0.2px">23.66</div><div class="t" style="left:639px;top:215px;width:52px;text-align:center;line-height:12px;letter-spacing:-0.2px">23</div><div class="t" style="left:691px;top:215px;width:45px;text-align:center;line-height:12px;letter-spacing:-0.2px">14</div><div class="t" style="left:736px;top:215px;width:67px;text-align:center;line-height:12px;letter-spacing:-0.2px">34</div><div class="t" style="left:803px;top:215px;width:101px;text-align:center;line-height:12px;letter-spacing:-0.2px">Kinetic</div><div class="t" style="left:904px;top:215px;width:53px;text-align:center;line-height:12px;letter-spacing:-0.2px">100</div><div class="t" style="left:957px;top:215px;width:62px;text-align:center;line-height:12px;letter-spacing:-0.2px">100</div><div class="t" style="left:1019px;top:215px;width:73px;text-align:center;line-height:12px;letter-spacing:-0.2px">100.00</div><div class="t" style="left:1092px;top:215px;width:47px;text-align:center;line-height:12px;letter-spacing:-0.2px">3%</div></div><div class="ab" style="left:227px;top:408px;width:1167px;height:5px;background:#f0f0f0"></div><div class="ab" style="left:230px;top:413px;width:1165px;height:262px;border-top:1px solid #a0a0a0;border-left:1px solid #a0a0a0;border-right:1px solid #fff;border-bottom:1px solid #fff;background:#e0e0e0;box-shadow:inset 1px 1px 0 #696969"></div><div class="ab" style="left:235px;top:419px;width:251px;height:251px;border:1px solid #000;background:#e0e0e0;box-shadow:0 0 0 1px #eeeeee, inset 0 0 0 1px #eeeeee"></div><div class="t" style="left:239px;top:422px;font-size:11px;letter-spacing:0.1px;line-height:12px">Damage</div><svg class="ab" style="left:0;top:0" width="1405" height="687" viewBox="0 0 1405 687"><path d="M360.30 544.30 L360.30 423.00 A121.3 121.3 0 0 1 473.96 501.92 Z" fill="#c000c0" stroke="#c000c0" stroke-width="0.6"/><path d="M360.30 544.30 L473.96 501.92 A121.3 121.3 0 0 1 467.11 601.79 Z" fill="#ff80ff" stroke="#ff80ff" stroke-width="0.6"/><path d="M360.30 544.30 L467.11 601.79 A121.3 121.3 0 0 1 402.11 658.17 Z" fill="#0000c0" stroke="#0000c0" stroke-width="0.6"/><path d="M360.30 544.30 L402.11 658.17 A121.3 121.3 0 0 1 320.02 658.72 Z" fill="#8080ff" stroke="#8080ff" stroke-width="0.6"/><path d="M360.30 544.30 L320.02 658.72 A121.3 121.3 0 0 1 260.50 613.24 Z" fill="#00c0c0" stroke="#00c0c0" stroke-width="0.6"/><path d="M360.30 544.30 L260.50 613.24 A121.3 121.3 0 0 1 239.03 546.93 Z" fill="#80ffff" stroke="#80ffff" stroke-width="0.6"/><path d="M360.30 544.30 L239.03 546.93 A121.3 121.3 0 0 1 252.39 488.90 Z" fill="#00c000" stroke="#00c000" stroke-width="0.6"/><path d="M360.30 544.30 L252.39 488.90 A121.3 121.3 0 0 1 289.49 445.81 Z" fill="#80ff80" stroke="#80ff80" stroke-width="0.6"/><path d="M360.30 544.30 L289.49 445.81 A121.3 121.3 0 0 1 322.00 429.20 Z" fill="#c0c000" stroke="#c0c000" stroke-width="0.6"/><path d="M360.30 544.30 L322.00 429.20 A121.3 121.3 0 0 1 357.39 423.03 Z" fill="#ffff80" stroke="#ffff80" stroke-width="0.6"/><path d="M360.30 544.30 L357.39 423.03 A121.3 121.3 0 0 1 360.30 423.00 Z" fill="#c04000" stroke="#c04000" stroke-width="0.6"/><circle cx="360.3" cy="544.3" r="121.3" fill="none" stroke="#000" stroke-width="1"/></svg><div class="ab" style="left:489px;top:419px;width:161px;height:155px;background:#000"></div><div class="ab" style="left:490px;top:420px;width:159px;height:13px;background:#c000c0"></div><div class="ab" style="left:490px;top:434px;width:159px;height:13px;background:#ff80ff"></div><div class="ab" style="left:490px;top:448px;width:159px;height:13px;background:#0000c0"></div><div class="ab" style="left:490px;top:462px;width:159px;height:13px;background:#8080ff"></div><div class="ab" style="left:490px;top:476px;width:159px;height:13px;background:#00c0c0"></div><div class="ab" style="left:490px;top:490px;width:159px;height:13px;background:#80ffff"></div><div class="ab" style="left:490px;top:504px;width:159px;height:13px;background:#00c000"></div><div class="ab" style="left:490px;top:518px;width:159px;height:13px;background:#80ff80"></div><div class="ab" style="left:490px;top:532px;width:159px;height:13px;background:#c0c000"></div><div class="ab" style="left:490px;top:546px;width:159px;height:13px;background:#ffff80"></div><div class="ab" style="left:490px;top:560px;width:159px;height:13px;background:#c04000"></div><div class="t" style="left:494px;top:420px;line-height:13px;color:#f4f4ea;text-shadow:1px 0 0 rgba(90,95,115,.7),-1px 0 0 rgba(90,95,115,.7),0 1px 0 rgba(90,95,115,.7),0 -1px 0 rgba(90,95,115,.7);letter-spacing:0.05px">19%</div><div class="t" style="left:519px;top:420px;line-height:13px;color:#f4f4ea;text-shadow:1px 0 0 rgba(90,95,115,.7),-1px 0 0 rgba(90,95,115,.7),0 1px 0 rgba(90,95,115,.7),0 -1px 0 rgba(90,95,115,.7);letter-spacing:0.05px">Cutting Beam</div><div class="t" style="left:494px;top:434px;line-height:13px;color:#f4f4ea;text-shadow:1px 0 0 rgba(90,95,115,.7),-1px 0 0 rgba(90,95,115,.7),0 1px 0 rgba(90,95,115,.7),0 -1px 0 rgba(90,95,115,.7);letter-spacing:0.05px">14%</div><div class="t" style="left:519px;top:434px;line-height:13px;color:#f4f4ea;text-shadow:1px 0 0 rgba(90,95,115,.7),-1px 0 0 rgba(90,95,115,.7),0 1px 0 rgba(90,95,115,.7),0 -1px 0 rgba(90,95,115,.7);letter-spacing:0.05px">Dual Heavy Disruptor Cannons: Scatter Volley I</div><div class="t" style="left:494px;top:448px;line-height:13px;color:#f4f4ea;text-shadow:1px 0 0 rgba(90,95,115,.7),-1px 0 0 rgba(90,95,115,.7),0 1px 0 rgba(90,95,115,.7),0 -1px 0 rgba(90,95,115,.7);letter-spacing:0.05px">12%</div><div class="t" style="left:519px;top:448px;line-height:13px;color:#f4f4ea;text-shadow:1px 0 0 rgba(90,95,115,.7),-1px 0 0 rgba(90,95,115,.7),0 1px 0 rgba(90,95,115,.7),0 -1px 0 rgba(90,95,115,.7);letter-spacing:0.05px">Dual Heavy Disruptor Cannons</div><div class="t" style="left:494px;top:462px;line-height:13px;color:#f4f4ea;text-shadow:1px 0 0 rgba(90,95,115,.7),-1px 0 0 rgba(90,95,115,.7),0 1px 0 rgba(90,95,115,.7),0 -1px 0 rgba(90,95,115,.7);letter-spacing:0.05px">11%</div><div class="t" style="left:519px;top:462px;line-height:13px;color:#f4f4ea;text-shadow:1px 0 0 rgba(90,95,115,.7),-1px 0 0 rgba(90,95,115,.7),0 1px 0 rgba(90,95,115,.7),0 -1px 0 rgba(90,95,115,.7);letter-spacing:0.05px">Dual Heavy Crescent Wave Cannons</div><div class="t" style="left:494px;top:476px;line-height:13px;color:#f4f4ea;text-shadow:1px 0 0 rgba(90,95,115,.7),-1px 0 0 rgba(90,95,115,.7),0 1px 0 rgba(90,95,115,.7),0 -1px 0 rgba(90,95,115,.7);letter-spacing:0.05px">10%</div><div class="t" style="left:519px;top:476px;line-height:13px;color:#f4f4ea;text-shadow:1px 0 0 rgba(90,95,115,.7),-1px 0 0 rgba(90,95,115,.7),0 1px 0 rgba(90,95,115,.7),0 -1px 0 rgba(90,95,115,.7);letter-spacing:0.05px">Dual Heavy Crescent Wave Cannons: Scatter Volley I</div><div class="t" style="left:494px;top:490px;line-height:13px;color:#f4f4ea;text-shadow:1px 0 0 rgba(90,95,115,.7),-1px 0 0 rgba(90,95,115,.7),0 1px 0 rgba(90,95,115,.7),0 -1px 0 rgba(90,95,115,.7);letter-spacing:0.05px">9%</div><div class="t" style="left:519px;top:490px;line-height:13px;color:#f4f4ea;text-shadow:1px 0 0 rgba(90,95,115,.7),-1px 0 0 rgba(90,95,115,.7),0 1px 0 rgba(90,95,115,.7),0 -1px 0 rgba(90,95,115,.7);letter-spacing:0.05px">Dual Heavy Disruptor Cannons: Scatter Volley II</div><div class="t" style="left:494px;top:504px;line-height:13px;color:#f4f4ea;text-shadow:1px 0 0 rgba(90,95,115,.7),-1px 0 0 rgba(90,95,115,.7),0 1px 0 rgba(90,95,115,.7),0 -1px 0 rgba(90,95,115,.7);letter-spacing:0.05px">8%</div><div class="t" style="left:519px;top:504px;line-height:13px;color:#f4f4ea;text-shadow:1px 0 0 rgba(90,95,115,.7),-1px 0 0 rgba(90,95,115,.7),0 1px 0 rgba(90,95,115,.7),0 -1px 0 rgba(90,95,115,.7);letter-spacing:0.05px">Dual Heavy Crescent Wave Cannons: Scatter Volley II</div><div class="t" style="left:494px;top:518px;line-height:13px;color:#f4f4ea;text-shadow:1px 0 0 rgba(90,95,115,.7),-1px 0 0 rgba(90,95,115,.7),0 1px 0 rgba(90,95,115,.7),0 -1px 0 rgba(90,95,115,.7);letter-spacing:0.05px">8%</div><div class="t" style="left:519px;top:518px;line-height:13px;color:#f4f4ea;text-shadow:1px 0 0 rgba(90,95,115,.7),-1px 0 0 rgba(90,95,115,.7),0 1px 0 rgba(90,95,115,.7),0 -1px 0 rgba(90,95,115,.7);letter-spacing:0.05px">Polarized Disruptor Turret: Scatter Volley I</div><div class="t" style="left:494px;top:532px;line-height:13px;color:#f4f4ea;text-shadow:1px 0 0 rgba(90,95,115,.7),-1px 0 0 rgba(90,95,115,.7),0 1px 0 rgba(90,95,115,.7),0 -1px 0 rgba(90,95,115,.7);letter-spacing:0.05px">5%</div><div class="t" style="left:519px;top:532px;line-height:13px;color:#f4f4ea;text-shadow:1px 0 0 rgba(90,95,115,.7),-1px 0 0 rgba(90,95,115,.7),0 1px 0 rgba(90,95,115,.7),0 -1px 0 rgba(90,95,115,.7);letter-spacing:0.05px">Polarized Disruptor Turret</div><div class="t" style="left:494px;top:546px;line-height:13px;color:#f4f4ea;text-shadow:1px 0 0 rgba(90,95,115,.7),-1px 0 0 rgba(90,95,115,.7),0 1px 0 rgba(90,95,115,.7),0 -1px 0 rgba(90,95,115,.7);letter-spacing:0.05px">5%</div><div class="t" style="left:519px;top:546px;line-height:13px;color:#f4f4ea;text-shadow:1px 0 0 rgba(90,95,115,.7),-1px 0 0 rgba(90,95,115,.7),0 1px 0 rgba(90,95,115,.7),0 -1px 0 rgba(90,95,115,.7);letter-spacing:0.05px">Polarized Disruptor Turret: Scatter Volley II</div><div class="t" style="left:494px;top:560px;line-height:13px;color:#f4f4ea;text-shadow:1px 0 0 rgba(90,95,115,.7),-1px 0 0 rgba(90,95,115,.7),0 1px 0 rgba(90,95,115,.7),0 -1px 0 rgba(90,95,115,.7);letter-spacing:0.05px">0%</div><div class="t" style="left:519px;top:560px;line-height:13px;color:#f4f4ea;text-shadow:1px 0 0 rgba(90,95,115,.7),-1px 0 0 rgba(90,95,115,.7),0 1px 0 rgba(90,95,115,.7),0 -1px 0 rgba(90,95,115,.7);letter-spacing:0.05px">Tractor Beam I</div></body></html>
